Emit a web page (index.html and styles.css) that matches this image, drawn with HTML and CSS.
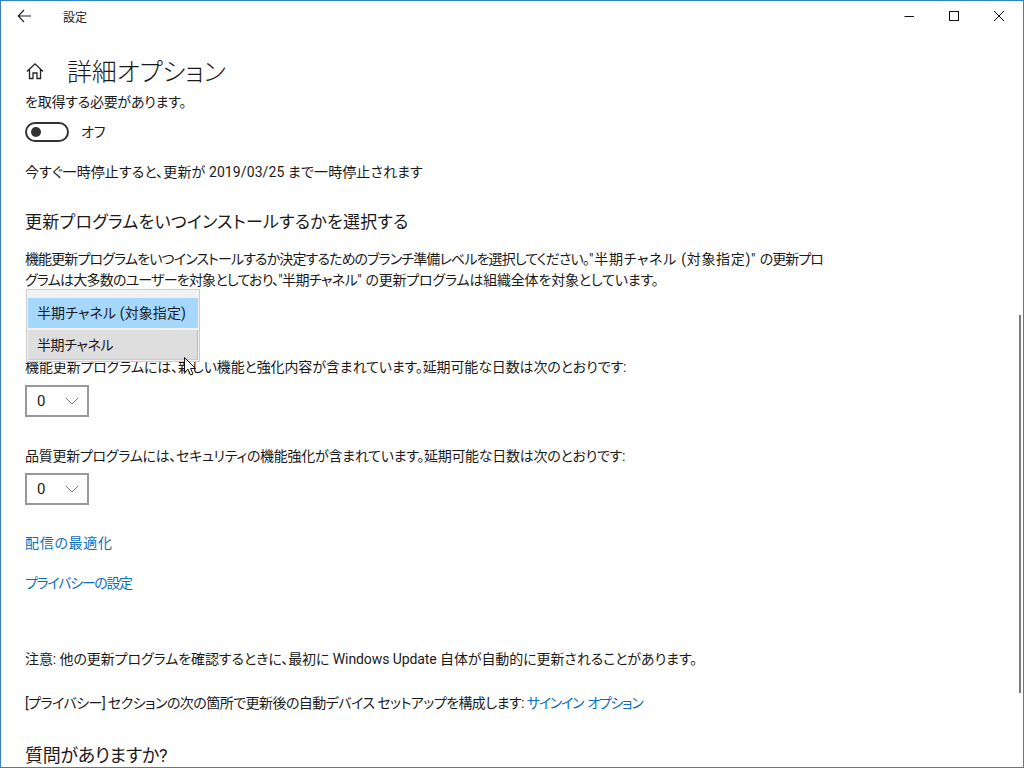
FILE: index.html
```html
<!DOCTYPE html>
<html lang="ja">
<head>
<meta charset="utf-8">
<title>設定</title>
<link rel="stylesheet" href="styles.css">
</head>
<body>
<div class="window">
  <header class="titlebar">
    <svg class="back" width="16" height="14" viewBox="0 0 16 14"><path d="M7 1 1.2 7 7 13M1.2 7H14" fill="none" stroke="#222" stroke-width="1.1"/></svg>
    <span class="apptitle">設定</span>
    <div class="controls">
      <svg width="12" height="12" viewBox="0 0 12 12"><path d="M1.500 6.500H11" stroke="#111" stroke-width="1"/></svg>
      <svg width="12" height="12" viewBox="0 0 12 12"><rect x="1.500" y="1.500" width="9" height="9" fill="none" stroke="#111" stroke-width="1"/></svg>
      <svg width="12" height="12" viewBox="0 0 12 12"><path d="M1 1 11 11M11 1 1 11" stroke="#111" stroke-width="1"/></svg>
    </div>
  </header>
  <div class="pagehead">
    <svg class="home" width="18" height="18" viewBox="0 0 18 18"><path d="M1 9.500 9 1.800 17 9.500M3.500 7.500V16.500H7V11H11V16.500H14.500V7.500" fill="none" stroke="#222" stroke-width="1.300"/></svg>
    <h1>詳細オプション</h1>
  </div>
  <main class="content">
    <p class="clip">を取得する必要があります。</p>
    <div class="toggle-row">
      <span class="toggle"><span class="knob"></span></span>
      <span class="toggle-label">オフ</span>
    </div>
    <p class="pause">今すぐ一時停止すると、更新が 2019/03/25 まで一時停止されます</p>
    <h2 class="h-update">更新プログラムをいつインストールするかを選択する</h2>
    <p class="para">
      <span class="para-line"><span class="l1a">機能更新プログラムをいつインストールするか決定するためのブランチ準備レベルを選択してください。</span><span class="l1b">"半期チャネル (対象指定)"</span> <span class="l1c">の更新プロ</span></span>
      <span class="para-line"><span class="l2a">グラムは大多数のユーザーを対象としており、</span><span class="l2b">"半期チャネル"</span> <span class="l2c">の更新プログラムは組織全体を対象としています。</span></span>
    </p>
    <p class="feature">機能更新プログラムには、新しい機能と強化内容が含まれています。延期可能な日数は次のとおりです:</p>
    <div class="select first"><span>0</span><svg width="14" height="8" viewBox="0 0 14 8"><path d="M.700.700 7 7 13.300.700" fill="none" stroke="#777" stroke-width="1"/></svg></div>
    <p class="quality">品質更新プログラムには、セキュリティの機能強化が含まれています。延期可能な日数は次のとおりです:</p>
    <div class="select second"><span>0</span><svg width="14" height="8" viewBox="0 0 14 8"><path d="M.700.700 7 7 13.300.700" fill="none" stroke="#777" stroke-width="1"/></svg></div>
    <p class="link-first"><a href="#">配信の最適化</a></p>
    <p class="link-second"><a href="#">プライバシーの設定</a></p>
    <p class="note">注意: 他の更新プログラムを確認するときに、最初に Windows Update 自体が自動的に更新されることがあります。</p>
    <p class="privacy">[プライバシー] セクションの次の箇所で更新後の自動デバイス セットアップを構成します: <a href="#">サインイン オプション</a></p>
    <h2 class="h-question">質問がありますか?</h2>
  </main>
  <div class="scrollbar"></div>
  <div class="popup">
    <div class="item selected">半期チャネル (対象指定)</div>
    <div class="item hover">半期チャネル</div>
  </div>
  <svg class="cursor" width="13" height="20" viewBox="0 0 13 20"><path d="M.500.500V15.500L4 12.300 6.500 18 9 17 6.600 11.500H11.500Z" fill="#fff" stroke="#111" stroke-width="1"/></svg>
</div>
</body>
</html>
```

FILE: styles.css
```css
* { box-sizing: border-box; }
html, body { margin: 0; height: 100%; }
body {
  font-family: Roboto, "Noto Sans CJK JP", sans-serif;
  font-feature-settings: "palt";
  color: #1a1a1a;
  font-size: 14px;
  background: #fff;
}
p, h1, h2 { margin: 0; font-weight: 400; }
.window {
  position: relative;
  width: 1024px;
  height: 768px;
  border: 1px solid #2b86cf;
  border-left-color: #3a7fb5;
  overflow: hidden;
  display: flex;
  flex-direction: column;
}
.titlebar {
  flex: none;
  height: 30px;
  display: flex;
  align-items: center;
  padding-left: 16px;
}
.back { flex: none; }
.apptitle { margin-left: 30px; font-size: 12px; color: #222; }
.controls {
  margin-left: auto;
  display: flex;
  gap: 33px;
  padding-right: 18px;
  align-items: center;
}
.pagehead {
  flex: none;
  display: flex;
  align-items: center;
  height: 48px;
  padding-left: 25px;
  margin-top: 16px;
}
.home { flex: none; }
h1 { margin-left: 23px; padding-top: 4px; font-size: 25px; line-height: 48px; letter-spacing: -0.2px; color: #1a1a1a; font-weight: 300; }
.content { flex: none; padding-left: 24px; width: 830px; line-height: 21px; }
.clip { margin-top: -3px; letter-spacing: -0.25px; }
.toggle-row { display: flex; align-items: center; margin-top: 8px; height: 22px; }
.toggle {
  width: 44px;
  height: 20px;
  border: 2px solid #333;
  border-radius: 10px;
  display: flex;
  align-items: center;
  padding-left: 4px;
}
.knob { width: 10px; height: 10px; border-radius: 50%; background: #333; }
.toggle-label { margin-left: 12px; }
.pause { margin-top: 19px; letter-spacing: 0.1px; }
.h-update { margin-top: 24px; font-size: 17px; line-height: 30px; letter-spacing: 0.25px; }
.para { margin-top: 12px; width: 810px; }
.para-line { display: block; height: 21px; white-space: nowrap; }
.l1a { letter-spacing: -0.88px; }
.l1b { letter-spacing: 0.7px; }
.l1c { letter-spacing: -1px; }
.l2a { letter-spacing: -0.8px; }
.l2b { letter-spacing: -0.6px; }
.l2c { letter-spacing: -0.2px; margin-left: 1px; }
.feature { margin-top: 66px; letter-spacing: -0.12px; }
.select {
  width: 64px;
  height: 32px;
  border: 2px solid #999;
  display: flex;
  align-items: center;
  justify-content: space-between;
  padding: 0 8px 0 10px;
  font-size: 15px;
}
.first { margin-top: 7px; }
.second { margin-top: 6px; }
.quality { margin-top: 29px; letter-spacing: -0.28px; }
a { color: #0a6fc2; text-decoration: none; }
.link-first { margin-top: 28px; letter-spacing: 0.7px; }
.link-second { margin-top: 19px; letter-spacing: -1.3px; }
.note { margin-top: 55px; letter-spacing: -0.09px; }
.privacy { margin-top: 23px; white-space: nowrap; letter-spacing: -0.55px; }
.privacy a { letter-spacing: -1.3px; word-spacing: 2px; }
.h-question { margin-top: 26px; font-size: 18px; line-height: 32px; letter-spacing: -0.3px; }
.scrollbar {
  position: absolute;
  left: 1018px;
  top: 314px;
  width: 2px;
  height: 378px;
  background: #7b7b7b;
}
.popup {
  position: absolute;
  left: 25px;
  top: 288px;
  width: 174px;
  height: 73px;
  background: #f2f2f2;
  border: 1px solid #ccc;
  padding: 8px 1px 0;
  display: flex;
  flex-direction: column;
  gap: 2px;
}
.item { height: 30px; line-height: 30px; padding-left: 9px; color: #1a1a1a; white-space: nowrap; }
.selected { background: #a6d8fe; letter-spacing: 0.1px; }
.hover { background: #dedede; border-right: 1px solid #bbb; border-bottom: 1px solid #ccc; letter-spacing: -0.4px; }
.cursor { position: absolute; left: 183px; top: 356px; }
```
